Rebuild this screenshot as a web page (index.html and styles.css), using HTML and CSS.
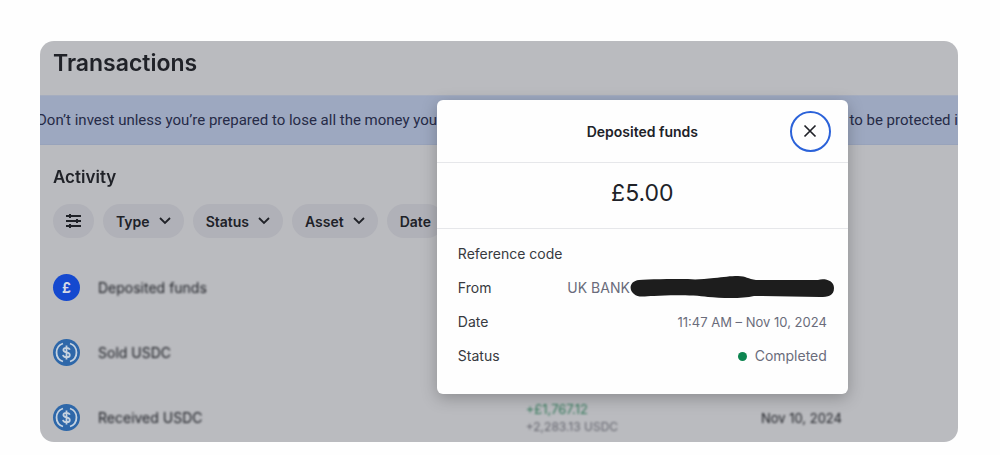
FILE: index.html
```html
<!DOCTYPE html>
<html lang="en">
<head>
    <meta charset="UTF-8">
    <meta name="viewport" content="width=device-width, initial-scale=1.0">
    <title>Transactions</title>
    <link rel="stylesheet" href="styles.css">
</head>
<body>
    <div class="screen">
        <header class="page-header"><h1>Transactions</h1></header>
        <p class="banner">
            <span>Don’t invest unless you’re prepared to lose all the money you</span>
            <span>to be protected if</span>
        </p>

        <main class="activity">
            <h2>Activity</h2>
            <div class="filters">
                <button type="button" class="chip" aria-label="Filters">
                    <svg width="15" height="14" viewBox="0 0 15 14">
                        <path d="M0 2h15M0 7h15M0 12h15" stroke="currentColor" stroke-width="1.8"/>
                        <path d="M4 0v4M11 5v4M4 10v4" stroke="currentColor" stroke-width="2"/>
                    </svg>
                </button>
                <button type="button" class="chip">Type
                    <svg width="12" height="8" viewBox="0 0 12 8"><path d="M1 1l5 5 5-5" fill="none" stroke="currentColor" stroke-width="1.8"/></svg>
                </button>
                <button type="button" class="chip">Status
                    <svg width="12" height="8" viewBox="0 0 12 8"><path d="M1 1l5 5 5-5" fill="none" stroke="currentColor" stroke-width="1.8"/></svg>
                </button>
                <button type="button" class="chip">Asset
                    <svg width="12" height="8" viewBox="0 0 12 8"><path d="M1 1l5 5 5-5" fill="none" stroke="currentColor" stroke-width="1.8"/></svg>
                </button>
                <button type="button" class="chip">Date</button>
            </div>

            <table class="transactions">
                <tr>
                    <td class="name">
                        <div class="asset">
                            <span class="coin coin-gbp">£</span>
                            <span class="blurred">Deposited funds</span>
                        </div>
                    </td>
                    <td class="amount"></td>
                    <td class="date"></td>
                </tr>
                <tr>
                    <td class="name">
                        <div class="asset">
                            <span class="coin coin-usdc">
                                <svg width="27" height="27" viewBox="0 0 27 27"><path d="M10 4.500a9.500 9.500 0 0 0 0 18M17 4.500a9.500 9.500 0 0 1 0 18" fill="none" stroke="currentColor" stroke-width="1.8"/><path d="M13.5 6.500v14M16.700 10.800c-.3-1.300-1.500-2-3.200-2-1.900 0-3.100.8-3.100 2.200 0 3.300 6.400 1.500 6.400 4.900 0 1.500-1.300 2.300-3.300 2.300s-3.300-.8-3.500-2.300" fill="none" stroke="currentColor" stroke-width="1.8"/></svg>
                            </span>
                            <span class="blurred">Sold USDC</span>
                        </div>
                    </td>
                    <td class="amount"></td>
                    <td class="date"></td>
                </tr>
                <tr>
                    <td class="name">
                        <div class="asset">
                            <span class="coin coin-usdc">
                                <svg width="27" height="27" viewBox="0 0 27 27"><path d="M10 4.500a9.500 9.500 0 0 0 0 18M17 4.500a9.500 9.500 0 0 1 0 18" fill="none" stroke="currentColor" stroke-width="1.8"/><path d="M13.5 6.500v14M16.700 10.800c-.3-1.300-1.500-2-3.200-2-1.900 0-3.100.8-3.100 2.200 0 3.300 6.400 1.500 6.400 4.900 0 1.500-1.300 2.300-3.300 2.300s-3.300-.8-3.500-2.300" fill="none" stroke="currentColor" stroke-width="1.8"/></svg>
                            </span>
                            <span class="blurred">Received USDC</span>
                        </div>
                    </td>
                    <td class="amount">
                        <div class="fiat">+£1,767.12</div>
                        <div class="crypto">+2,283.13 USDC</div>
                    </td>
                    <td class="date"><span class="blurred">Nov 10, 2024</span></td>
                </tr>
            </table>
        </main>

        <div class="modal" role="dialog" aria-labelledby="modalTitle">
            <div class="modal-header">
                <h3 id="modalTitle">Deposited funds</h3>
                <button type="button" class="close" aria-label="Close">
                    <svg width="14" height="14" viewBox="0 0 14 14"><path d="M1.5 1.5l11 11M12.5 1.5l-11 11" stroke="currentColor" stroke-width="1.7"/></svg>
                </button>
            </div>
            <div class="modal-total">£5.00</div>
            <dl class="details">
                <div class="detail"><dt>Reference code</dt><dd></dd></div>
                <div class="detail">
                    <dt>From</dt>
                    <dd class="redacted">UK BANK<svg width="204" height="24" viewBox="0 0 204 24"><path d="M9 4C18 3 40 3 58 3C66 4 74 3 84 2C94 1 100 0 108 0C116 0 118 3 126 4C144 4 166 4 188 4C194 2 204 4 204 12C204 20 198 21 190 21C168 21 146 20 124 20C112 23 90 22 78 21C64 19 40 19 24 20C15 20 8 22 4 18C-2 13 0 5 9 4Z" fill="#1d1d1d"/></svg></dd>
                </div>
                <div class="detail"><dt>Date</dt><dd class="timestamp">11:47 AM – Nov 10, 2024</dd></div>
                <div class="detail"><dt>Status</dt><dd><span class="dot"></span>Completed</dd></div>
            </dl>
        </div>
    </div>
</body>
</html>
```

FILE: styles.css
```css
* {
    box-sizing: border-box;
}

body {
    font-family: Inter, "Liberation Sans", sans-serif;
    font-size: 14px;
    margin: 0;
    padding: 41px 42px 13px 40px;
    background-color: #fefefe;
    color: #202228;
}

h1, h2, h3, p, dl, dd {
    margin: 0;
}

.screen {
    position: relative;
    height: calc(100vh - 54px);
    overflow: hidden;
    border-radius: 14px;
    background-color: #babbbf;
}

.page-header {
    height: 54px;
    padding: 6px 13px;
}

h1 {
    font-size: 23px;
    line-height: 32px;
    font-weight: 600;
    filter: blur(0.6px);
}

/* the notice runs past both edges of the screen */
.banner {
    display: grid;
    grid-template-columns: 1fr 12%;
    height: 50px;
    margin-left: -3px;
    line-height: 48px;
    border-top: 1px solid #a5adbf;
    border-bottom: 1px solid #98a3bb;
    background-color: #9da8c0;
    color: #262b47;
    font-family: Roboto, sans-serif;
    font-size: 15px;
    white-space: nowrap;
}

.banner span + span {
    padding-left: 2px;
}

.activity {
    padding: 22px 13px 0;
}

h2 {
    font-size: 17px;
    line-height: 20px;
    font-weight: 600;
    filter: blur(0.6px);
}

.filters {
    display: flex;
    gap: 9px;
    margin-top: 17px;
}

.chip {
    display: flex;
    align-items: center;
    gap: 9px;
    height: 34px;
    padding: 0 13px;
    border: none;
    border-radius: 17px;
    background-color: #b0b1b8;
    color: #202228;
    font-family: inherit;
    font-size: 14px;
    font-weight: 600;
    cursor: pointer;
}

.transactions {
    width: 100%;
    margin-top: 17px;
    border-collapse: collapse;
    table-layout: fixed;
}

.transactions td {
    height: 65px;
    padding: 0;
}

.transactions .name {
    width: 53%;
}

.transactions .amount {
    width: 18%;
}

.transactions .date {
    padding-right: 103px;
    font-size: 13px;
    text-align: right;
}

.asset {
    display: flex;
    align-items: center;
    gap: 18px;
}

.blurred {
    filter: blur(1px);
}

.coin {
    display: flex;
    align-items: center;
    justify-content: center;
    width: 27px;
    height: 27px;
    border-radius: 50%;
    font-weight: 700;
}

.coin-gbp {
    background-color: #1549cf;
    color: #d5d9e6;
}

.coin-usdc {
    background-color: #2e67a9;
    color: #c5d2e0;
}

.fiat, .crypto {
    line-height: 18px;
    filter: blur(1px);
}

.fiat {
    font-size: 13px;
    color: #337a5b;
}

.crypto {
    font-size: 12px;
    color: #65666f;
}

.modal {
    position: absolute;
    top: 59px;
    right: 12%;
    width: 411px;
    border-radius: 6px;
    background-color: #fefefe;
    box-shadow: 0 4px 16px rgba(0, 0, 0, 0.25);
}

.modal-header {
    display: grid;
    grid-template-columns: 41px 1fr 41px;
    align-items: center;
    height: 63px;
    padding: 0 17px;
    border-bottom: 1px solid #e6e7ea;
}

h3 {
    grid-column: 2;
    font-size: 14px;
    font-weight: 600;
    text-align: center;
}

.close {
    display: flex;
    align-items: center;
    justify-content: center;
    width: 41px;
    height: 41px;
    padding: 0;
    border: 2px solid #2b62d9;
    border-radius: 50%;
    background-color: #fefefe;
    color: #202228;
    cursor: pointer;
}

.modal-total {
    padding-bottom: 5px;
    border-bottom: 1px solid #e6e7ea;
    font-size: 23px;
    line-height: 60px;
    text-align: center;
}

.details {
    padding: 8px 21px 21px;
}

.detail {
    display: flex;
    justify-content: space-between;
    line-height: 34px;
}

dt {
    color: #383a40;
}

dd {
    display: flex;
    align-items: center;
    color: #6a6c7b;
}

.redacted {
    margin-right: -7px;
}

.timestamp {
    font-size: 13px;
}

.dot {
    width: 9px;
    height: 9px;
    margin-right: 8px;
    border-radius: 50%;
    background-color: #0d8550;
}
```
